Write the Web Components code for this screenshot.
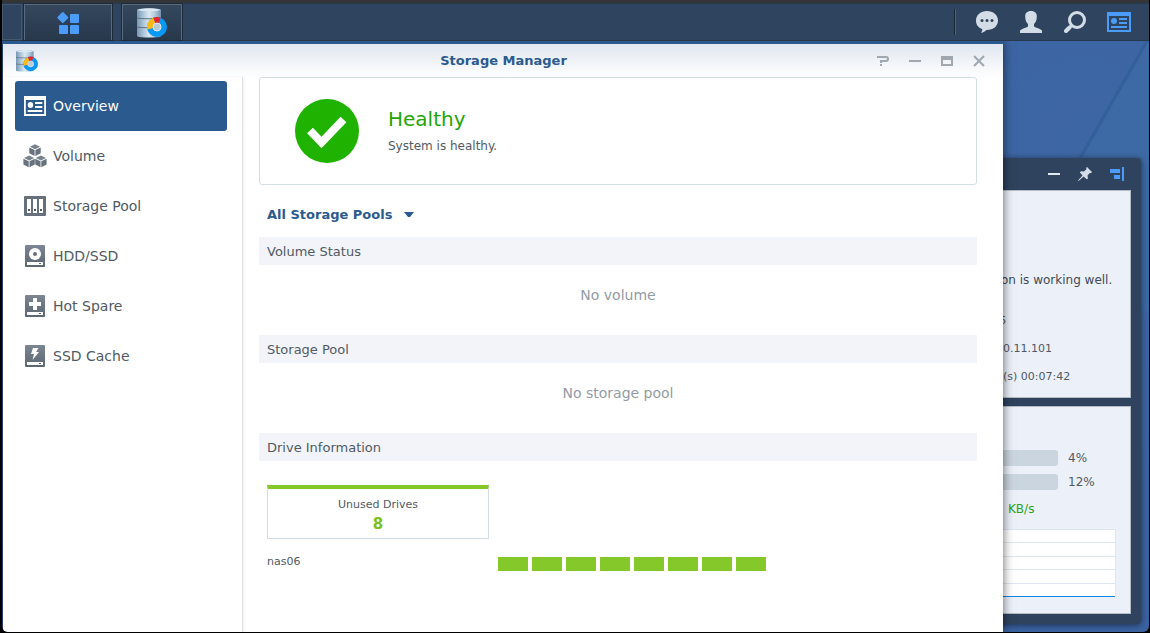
<!DOCTYPE html>
<html lang="en">
<head>
<meta charset="utf-8">
<title>Storage Manager</title>
<style>
  html, body { height: 100%; }
  body { margin: 0; background: #000; font-family: "DejaVu Sans", Verdana, sans-serif; color: #505a64; }
</style>
</head>
<body>
<nas-desktop>
  <nas-taskbar slot="bar"></nas-taskbar>
  <nas-widgets></nas-widgets>
  <nas-window heading="Storage Manager">
    <nas-nav slot="side"></nas-nav>
    <nas-status heading="Healthy">System is healthy.</nas-status>
    <nas-pool-picker></nas-pool-picker>
    <nas-section heading="Volume Status"><nas-empty>No volume</nas-empty></nas-section>
    <nas-section heading="Storage Pool"><nas-empty>No storage pool</nas-empty></nas-section>
    <nas-section heading="Drive Information"><nas-drives host="nas06" count="8"></nas-drives></nas-section>
  </nas-window>
</nas-desktop>

<script>
const define = (name, html, setup) => customElements.define(name, class extends HTMLElement {
  constructor() {
    super();
    this.attachShadow({ mode: 'open' }).innerHTML = '<style>*{box-sizing:border-box}button{font:inherit;color:inherit;background:none;border:0;padding:0;margin:0}</style>' + html(this);
    if (setup) setup(this);
  }
});

const drive = inner => `<svg viewBox="0 0 20 22" width="20" height="22"><rect width="20" height="22" rx="1" fill="url(#g)"/><rect x="2" y="17" width="16" height="3" fill="#fff"/><rect x="14" y="18" width="2" height="1" fill="#5d6874"/>${inner}<defs><linearGradient id="g" x2="0" y2="1"><stop stop-color="#7d8793"/><stop offset="1" stop-color="#5c6672"/></linearGradient></defs></svg>`;
const cube = (x, y) => `<g transform="translate(${x} ${y})"><path d="M.6 2.8 5.7.2 10.800 2.800 5.700 5.300Z" fill="#79838e"/><path d="M0 3.500 5.300 6.100V12L0 9.300ZM11.400 3.500 6.100 6.100V12L11.400 9.300Z" fill="#67727e"/></g>`;
const card = (c, s) => `<svg viewBox="0 0 24 20" width="${s}" height="20" preserveAspectRatio="none"><path fill="${c}" fill-rule="evenodd" d="M0 0H24V20H0ZM2 4V18H22V4Z"/><circle cx="7" cy="9" r="3" fill="${c}"/><path stroke="${c}" stroke-width="2" d="M12 7h8M12 11h8M4 15h16"/></svg>`;
const storage = s => `<svg viewBox="0 0 30 30" width="${s}" height="${s}"><defs><linearGradient id="m"><stop stop-color="#7797b3"/><stop offset=".25" stop-color="#a9c3d7"/><stop offset=".5" stop-color="#dbe9f2"/><stop offset=".75" stop-color="#b2cbdc"/><stop offset="1" stop-color="#7393ad"/></linearGradient></defs>
<path d="M0 2C0-.3 24-.3 24 2V28C24 30 0 30 0 28Z" fill="url(#m)"/><ellipse cx="12" cy="1.800" rx="11.500" ry="1.300" fill="#dce9f2"/><path d="M0 10C3 11 21 11 24 10M0 19C3 20 21 20 24 19" fill="none" stroke="#5e6e7b" stroke-width="1"/>
<circle cx="20" cy="19" r="4.500" fill="#b9cad7"/><g fill="none" stroke-width="6"><circle cx="20" cy="19" r="7" stroke="#0a98f5"/><path d="M13.200 20.800A7 7 0 0 1 17.400 12.500" stroke="#fdba12"/><path d="M17.400 12.500A7 7 0 0 1 22.600 12.500" stroke="#e8232a"/></g><circle cx="20" cy="19" r="4" fill="none" stroke="#e2ebf2"/></svg>`;

const icons = {
  storage: storage(30), storageSmall: storage(22),
  menu: `<svg viewBox="0 0 24 24" width="24" height="24" fill="#4a9cf8"><rect x="2.600" y="2.400" width="8.400" height="8.400" rx="1" transform="rotate(45 6.800 6.600)"/><rect x="14" y="3" width="9" height="9" rx="1"/><rect x="3" y="14" width="9" height="9" rx="1"/><rect x="14" y="14" width="9" height="9" rx="1"/></svg>`,
  chat: `<svg viewBox="0 0 22 22" width="22" height="22"><path fill="#d3dde7" d="M11 0C4.800 0 0 4 0 9.600c0 4.600 2.600 7.400 6.400 8.600-.1 1.400-.6 2.700-1.400 3.800 2-.3 4-1.400 5.400-2.900C17 19.300 22 15.400 22 9.600 22 4 17.200 0 11 0Z"/><g fill="#304359"><circle cx="6" cy="9.500" r="1.500"/><circle cx="11" cy="9.500" r="1.500"/><circle cx="16" cy="9.500" r="1.500"/></g></svg>`,
  user: `<svg viewBox="0 0 22 22" width="22" height="22"><path fill="#d3dde7" d="M11 0c4 0 6 2.200 5.800 5.800C16.600 10 15.600 11.500 14 13v2.500c2 1.500 6 2 8 4V22H0v-2.500c2-2 6-2.500 8-4V13c-1.600-1.500-2.600-3-2.800-7.200C5 2.200 7 0 11 0Z"/></svg>`,
  search: `<svg viewBox="0 0 22 22" width="22" height="22" fill="none" stroke="#d3dde7"><circle cx="13" cy="9" r="7.500" stroke-width="3"/><path d="M7.500 14.500 5 17" stroke-width="3"/><path d="M5.500 16.500 2 20" stroke-width="4" stroke-linecap="round"/></svg>`,
  widgets: card('#4a9cf8', 24), overview: card('#fff', 22),
  volume: `<svg viewBox="0 0 24 24" width="24" height="24">${cube(6.300, 0)}${cube(.4, 11.200)}${cube(12.200, 11.200)}</svg>`,
  pool: `<svg viewBox="0 0 22 20" width="22" height="20"><rect width="22" height="20" rx="1" fill="#65707c"/><path fill="#fff" d="M3 3h4v14H3zM9 3h4v14H9zM15 3h4v14h-4z"/><path fill="#4e5965" d="M4 13h2v2H4zM10 13h2v2h-2zM16 13h2v2h-2z"/></svg>`,
  hdd: drive('<circle cx="10" cy="9" r="6" fill="#fff"/><circle cx="10" cy="9" r="2" fill="#65707c"/>'),
  spare: drive('<path fill="#fff" d="M8 3h4v4h4v4h-4v4H8v-4H4V7h4z"/>'),
  cache: drive('<path fill="#fff" d="M8 3h5.500L11 7h3L7.500 15 9 9H6z"/>'),
  check: `<svg viewBox="0 0 64 64" width="64" height="64"><circle cx="32" cy="32" r="32" fill="#1fb200"/><path fill="none" stroke="#fff" stroke-width="8" d="M15 31.500 26.500 43.500 48.500 20.500"/></svg>`,
  help: `<svg viewBox="0 0 12 12" width="12" height="12" fill="none" stroke="#a0a7af" stroke-width="2"><path d="M0 2h9q2 0 2 2t-2 2H4v2M3 10h2"/></svg>`,
  min: `<svg viewBox="0 0 12 12" width="12" height="12"><path fill="#a0a7af" d="M0 5h12v2H0z"/></svg>`,
  max: `<svg viewBox="0 0 12 12" width="12" height="12"><path fill="#a0a7af" fill-rule="evenodd" d="M0 1h12v10H0zM2 5v4h8V5z"/></svg>`,
  close: `<svg viewBox="0 0 12 12" width="12" height="12"><path stroke="#a0a7af" stroke-width="2" d="m1 1 10 10M11 1 1 11"/></svg>`,
  minLight: `<svg viewBox="0 0 12 12" width="12" height="12"><path fill="#e3eaf1" d="M0 5h12v2H0z"/></svg>`,
  pin: `<svg viewBox="0 0 14 14" width="14" height="14" fill="#d3dde7"><path d="M9 0 14 5 13 6.200 12 5.800 9.500 8.500 10 11.500 8.700 12.300 5.600 9.500.5 14 0 13.500 4.500 8.400 1.800 5.300 3 4.200 6 4.600 8.600 2 8 1Z"/></svg>`,
  dock: `<svg viewBox="0 0 14 14" width="14" height="14" fill="#4a9cf8"><path d="M0 2h10v4H0zM4 8h6v4H4zM12 0h2v14h-2z"/></svg>`
};
define('nas-icon', el => `<style>:host{display:flex;align-items:center;justify-content:center}svg{display:block}</style>${icons[el.getAttribute('name')]}`);

define('nas-desktop', () => `<style>
  :host{display:flex;flex-direction:column;min-height:100vh;box-sizing:border-box;padding:0 1px 1px 2px}
  .lid{height:3px;background:#343537}
  .area{position:relative;flex:1;overflow:hidden;border-radius:0 0 6px 6px;background:radial-gradient(circle at 94% 16%,#3d66a4,#3a61a0 60%,#375b97);min-height:580px}
  .fold{position:absolute;right:0;top:0}
  </style><div class="lid"></div><slot name="bar"></slot>
  <div class="area"><svg class="fold" width="160" height="270" viewBox="0 0 160 270"><path fill="#3d69a4" d="M160 0V270H6Z"/><path stroke="#34609a" stroke-width="3" d="M158 0 5 268"/></svg><slot></slot></div>`);

define('nas-taskbar', () => `<style>
  :host{display:flex;height:38px;background:#2f445f;border-bottom:1px solid #27384d;box-sizing:border-box;color:#d3dde7;border-top:1px solid #253a52}
  .edge{width:20px;border:1px solid #46586d}
  button{display:flex;align-items:center;justify-content:center}
  .menu{width:88px;margin:0 10px 0 2px}.app{width:60px}
  .menu,.app{background:linear-gradient(#34475d,#27384b);border:solid #5a6b7e;border-width:1px 1px 0;box-shadow:0 0 0 1px #1d2a39}
  .tray{margin-left:auto;display:flex;align-items:center;padding-right:8px}
  .tray button{width:44px;height:36px}
  .tray::before{content:"";width:2px;height:26px;margin-right:9px;background:linear-gradient(90deg,#1a2735 50%,#506177 50%)}
  </style><div class="edge"></div>
  <button class="menu" aria-label="Main menu"><nas-icon name="menu"></nas-icon></button>
  <button class="app" aria-label="Open Storage Manager"><nas-icon name="storage"></nas-icon></button>
  <div class="tray"><button aria-label="Notifications"><nas-icon name="chat"></nas-icon></button><button aria-label="Options"><nas-icon name="user"></nas-icon></button><button aria-label="Search"><nas-icon name="search"></nas-icon></button><button aria-label="Widgets"><nas-icon name="widgets"></nas-icon></button></div>`);

define('nas-window', el => `<style>
  :host{position:absolute;inset:0 146px 0 1px;display:flex;flex-direction:column;background:linear-gradient(#e0e7f0,#fff 34px);border-top:3px solid #2b5a8f;box-sizing:border-box;box-shadow:0 0 10px #0009}
  header{display:flex;align-items:center;height:33px;padding:0 18px 0 13px}
  h1{flex:1;margin:0;text-align:center;font-size:13px;line-height:18px;color:#2b5a8f;padding-left:92px}
  .tools{display:flex;gap:20px}
  .tools button{width:12px}
  main{flex:1;display:flex;min-height:0}
  aside{width:240px;border-right:1px solid #dfe3e6;box-shadow:1px 0 2px #0001}
  .body{flex:1;padding:0 26px 0 16px;min-width:0}
  </style><header><nas-icon name="storageSmall"></nas-icon><h1>${el.getAttribute('heading')}</h1>
  <div class="tools"><button aria-label="Help"><nas-icon name="help"></nas-icon></button><button aria-label="Minimize"><nas-icon name="min"></nas-icon></button><button aria-label="Maximize"><nas-icon name="max"></nas-icon></button><button aria-label="Close"><nas-icon name="close"></nas-icon></button></div></header>
  <main><aside><slot name="side"></slot></aside><div class="body"><slot></slot></div></main>`);

define('nas-nav', () => `<style>
  :host{display:block;padding:4px 15px 0 12px}
  nav{display:flex;flex-direction:column}
  button{display:flex;align-items:center;height:50px;gap:6px;padding-left:8px;font-size:14px;border-radius:3px;text-align:left}
  nas-icon{width:24px}
  .on{background:#2b5a8f;color:#fff}
  </style><nav aria-label="Storage Manager">${[['overview', 'Overview'], ['volume', 'Volume'], ['pool', 'Storage Pool'], ['hdd', 'HDD/SSD'], ['spare', 'Hot Spare'], ['cache', 'SSD Cache']]
    .map(([i, t], n) => `<button class="${n ? '' : 'on'}"><nas-icon name="${i}"></nas-icon><span>${t}</span></button>`).join('')}</nav>`);

define('nas-status', el => `<style>
  :host{display:flex;align-items:center;gap:29px;height:108px;padding-left:35px;border:1px solid #d1dee5;border-radius:3px;box-sizing:border-box;background:#fff}
  h2{margin:0 0 4px;font-size:20px;font-weight:400;line-height:26px;color:#1fa505}
  p{margin:0;font-size:12px;line-height:20px}
  </style><nas-icon name="check"></nas-icon><div><h2>${el.getAttribute('heading')}</h2><p><slot></slot></p></div>`);

define('nas-pool-picker', () => `<style>
  :host{display:flex;align-items:center;height:52px;padding:8px 8px 0;box-sizing:border-box}
  label{display:flex;align-items:center;position:relative}
  select{appearance:none;border:0;background:none;padding:0 22px 0 0;margin:0;font:bold 13px/20px "DejaVu Sans",Verdana,sans-serif;color:#2b5a8f}
  svg{position:absolute;right:1px;pointer-events:none}
  </style><label><select aria-label="Storage pool"><option>All Storage Pools</option></select><svg width="10" height="6"><path d="M0 0h10L6 5H4Z" fill="#2b5a8f"/></svg></label>`);

define('nas-section', el => `<style>
  :host{display:block}
  h3{margin:0;padding:1px 8px 0;font-size:13px;font-weight:400;line-height:27px;background:#f3f4f9}
  </style><h3>${el.getAttribute('heading')}</h3><slot></slot>`);

define('nas-empty', () => `<style>:host{display:block;height:70px;line-height:60px;font-size:14px;text-align:center;color:#929ba4}</style><slot></slot>`);

define('nas-drives', el => `<style>
  :host{display:block;padding:24px 8px;font-size:11px}
  .card{width:222px;height:54px;border:1px solid #d1dee5;border-top:4px solid #84c82a;text-align:center;padding-top:6px;line-height:20px}
  b{display:block;font-size:15px;line-height:18px;color:#7ac01e}
  .row{display:flex;margin-top:14px;line-height:18px}
  .name{width:231px}
  .bays{display:flex;gap:4px;padding-top:4px}
  .bays i{width:30px;height:14px;background:#84c82a}
  </style><div class="card">Unused Drives<b>${el.getAttribute('count')}</b></div>
  <div class="row"><span class="name">${el.getAttribute('host')}</span><div class="bays">${'<i></i>'.repeat(+el.getAttribute('count'))}</div></div>`);

define('nas-widgets', () => `<style>
  :host{position:absolute;top:117px;right:8px;width:160px;display:flex;flex-direction:column;gap:8px;padding:0 10px 10px;box-sizing:border-box;background:#2f435e;border-radius:4px;box-shadow:0 1px 6px #0008}
  header{display:flex;justify-content:flex-end;align-items:center;height:32px;gap:18px;padding-right:7px;margin-bottom:-8px}
  section{background:#ecf0f9;border:1px solid #b3bcc4;height:208px;padding-left:19px;font-size:11px;line-height:28px;margin-left:-10px}
  p{margin:0;white-space:nowrap;padding-left:2px}
  .health{padding-top:74px}
  .health p:first-child{font-size:12px;line-height:30px;color:#414b55;margin-bottom:12px;padding-left:0}
  .health .name{padding:0;margin-left:-2px}
  .load{padding-top:39px;font-size:12px;line-height:24px}
  .meter{display:flex;align-items:center;gap:10px}
  .meter i{width:57px;height:16px;border-radius:3px;background:#cbd5df}
  .rate{color:#29a319;padding-left:7px;line-height:30px}
  .chart{width:115px;height:68px;margin-top:5px;display:flex;flex-direction:column;border:solid #dce7f2;border-width:1px 1px 0;background:#fff}
  .chart i{flex:1;border-bottom:1px solid #dce7f2}
  .chart i:last-child{border-bottom-color:#1086e0}
  </style><header><button aria-label="Minimize widgets"><nas-icon name="minLight"></nas-icon></button><button aria-label="Pin widgets"><nas-icon name="pin"></nas-icon></button><button aria-label="Dock widgets"><nas-icon name="dock"></nas-icon></button></header>
  <section class="health"><p>on is working well.</p><p class="name">6</p><p>0.11.101</p><p>(s) 00:07:42</p></section>
  <section class="load"><div class="meter"><i></i>4%</div><div class="meter"><i></i>12%</div><p class="rate">KB/s</p><div class="chart"><i></i><i></i><i></i><i></i><i></i></div></section>`);
</script>
</body>
</html>
